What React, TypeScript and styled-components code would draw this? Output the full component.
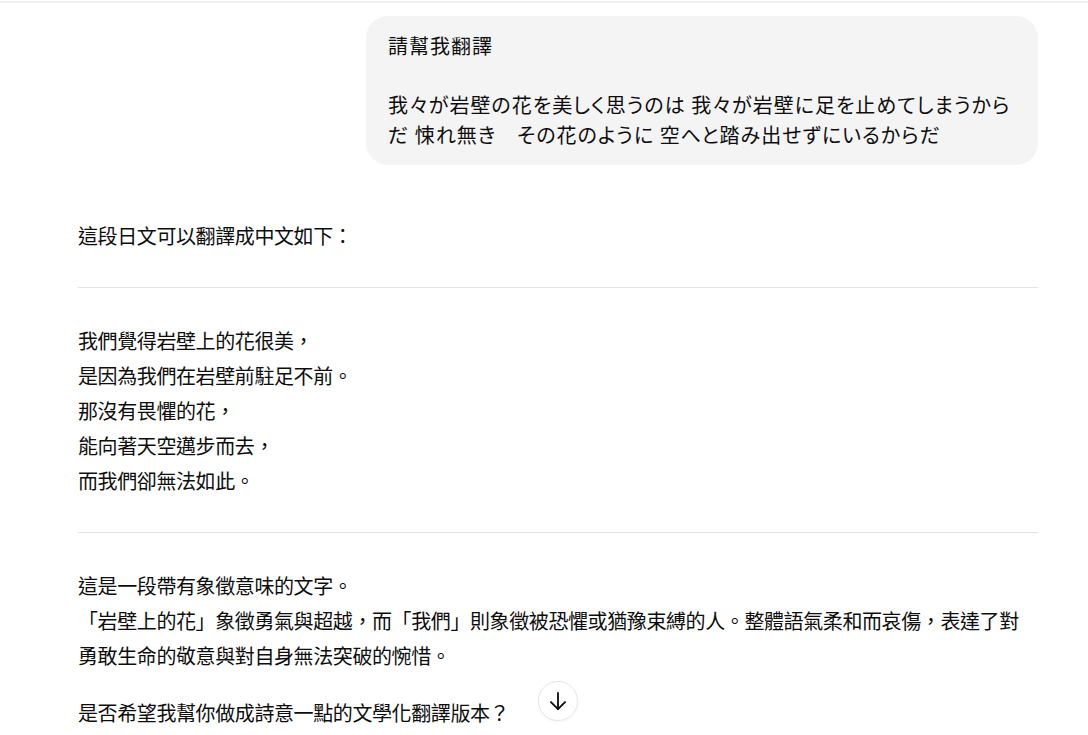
import * as React from "react";
import styled, { createGlobalStyle } from "styled-components";

const GlobalStyle = createGlobalStyle`
  html, body {
    margin: 0;
    padding: 0;
    background: #ffffff;
    overflow: hidden;
  }
  body {
    font-family: "Noto Sans CJK TC", "Noto Sans", sans-serif;
    color: #0d0d0d;
  }
`;

const Page = styled.div`
  position: relative;
  height: 735px;
  overflow: hidden;
`;

const TopRule = styled.div`
  height: 1px;
  border-bottom: 2px solid #f1f1f1;
`;

const Thread = styled.main`
  width: 960px;
  margin-left: 78px;
  display: flex;
  flex-direction: column;
`;

const UserRow = styled.div`
  display: flex;
  justify-content: flex-end;
  margin-top: 13px;
`;

const Bubble = styled.div`
  width: 672px;
  box-sizing: border-box;
  background: #f4f4f4;
  border-radius: 22px;
  padding: 15px 22px 16px;
  font-size: 20px;
  line-height: 29.5px;
  letter-spacing: 1px;
  white-space: pre-wrap;
  font-family: "Noto Sans CJK JP", "Noto Sans CJK TC", sans-serif;
  font-feature-settings: "palt";
`;

const Answer = styled.article`
  margin-top: 53px;
  font-size: 20px;
  line-height: 35px;
  letter-spacing: -0.4px;
`;

const Paragraph = styled.p<{ $gap?: number }>`
  margin: 0 0 ${p => p.$gap ?? 0}px;
`;

const Divider = styled.hr`
  border: none;
  border-top: 1px solid #e3e3e3;
  margin: 34px 0 35px;
`;

const ScrollButton = styled.button`
  position: absolute;
  left: 558px;
  top: 681px;
  transform: translateX(-50%);
  width: 40px;
  height: 40px;
  border-radius: 50%;
  border: 1px solid #e6e6e6;
  background: #ffffff;
  display: flex;
  align-items: center;
  justify-content: center;
  padding: 0;
  color: #0d0d0d;
  box-shadow: 0 1px 3px rgba(0, 0, 0, 0.04);
`;

const ArrowDown = () => (
  <svg width="26" height="26" viewBox="0 0 24 24" fill="none" stroke="currentColor" strokeWidth="1.7" strokeLinecap="round" strokeLinejoin="round">
    <path d="M12 4.5v15" />
    <path d="M5.5 13l6.5 6.5 6.5-6.5" />
  </svg>
);

const userText =
  "請幫我翻譯\n\n我々が岩壁の花を美しく思うのは 我々が岩壁に足を止めてしまうから\nだ 悚れ無き\u3000その花のように 空へと踏み出せずにいるからだ";

const poem = [
  "我們覺得岩壁上的花很美，",
  "是因為我們在岩壁前駐足不前。",
  "那沒有畏懼的花，",
  "能向著天空邁步而去，",
  "而我們卻無法如此。"
];

export default function App() {
  return (
    <Page>
      <GlobalStyle />
      <TopRule />
      <Thread>
        <UserRow>
          <Bubble>{userText}</Bubble>
        </UserRow>
        <Answer>
          <Paragraph>這段日文可以翻譯成中文如下：</Paragraph>
          <Divider />
          <Paragraph>
            {poem.map((line, i) => (
              <React.Fragment key={i}>
                {line}
                {i < poem.length - 1 && <br />}
              </React.Fragment>
            ))}
          </Paragraph>
          <Divider />
          <Paragraph $gap={22}>
            這是一段帶有象徵意味的文字。
            <br />
            「岩壁上的花」象徵勇氣與超越，而「我們」則象徵被恐懼或猶豫束縛的人。整體語氣柔和而哀傷，表達了對
            <br />
            勇敢生命的敬意與對自身無法突破的惋惜。
          </Paragraph>
          <Paragraph>是否希望我幫你做成詩意一點的文學化翻譯版本？</Paragraph>
        </Answer>
      </Thread>
      <ScrollButton aria-label="Scroll to bottom">
        <ArrowDown />
      </ScrollButton>
    </Page>
  );
}
